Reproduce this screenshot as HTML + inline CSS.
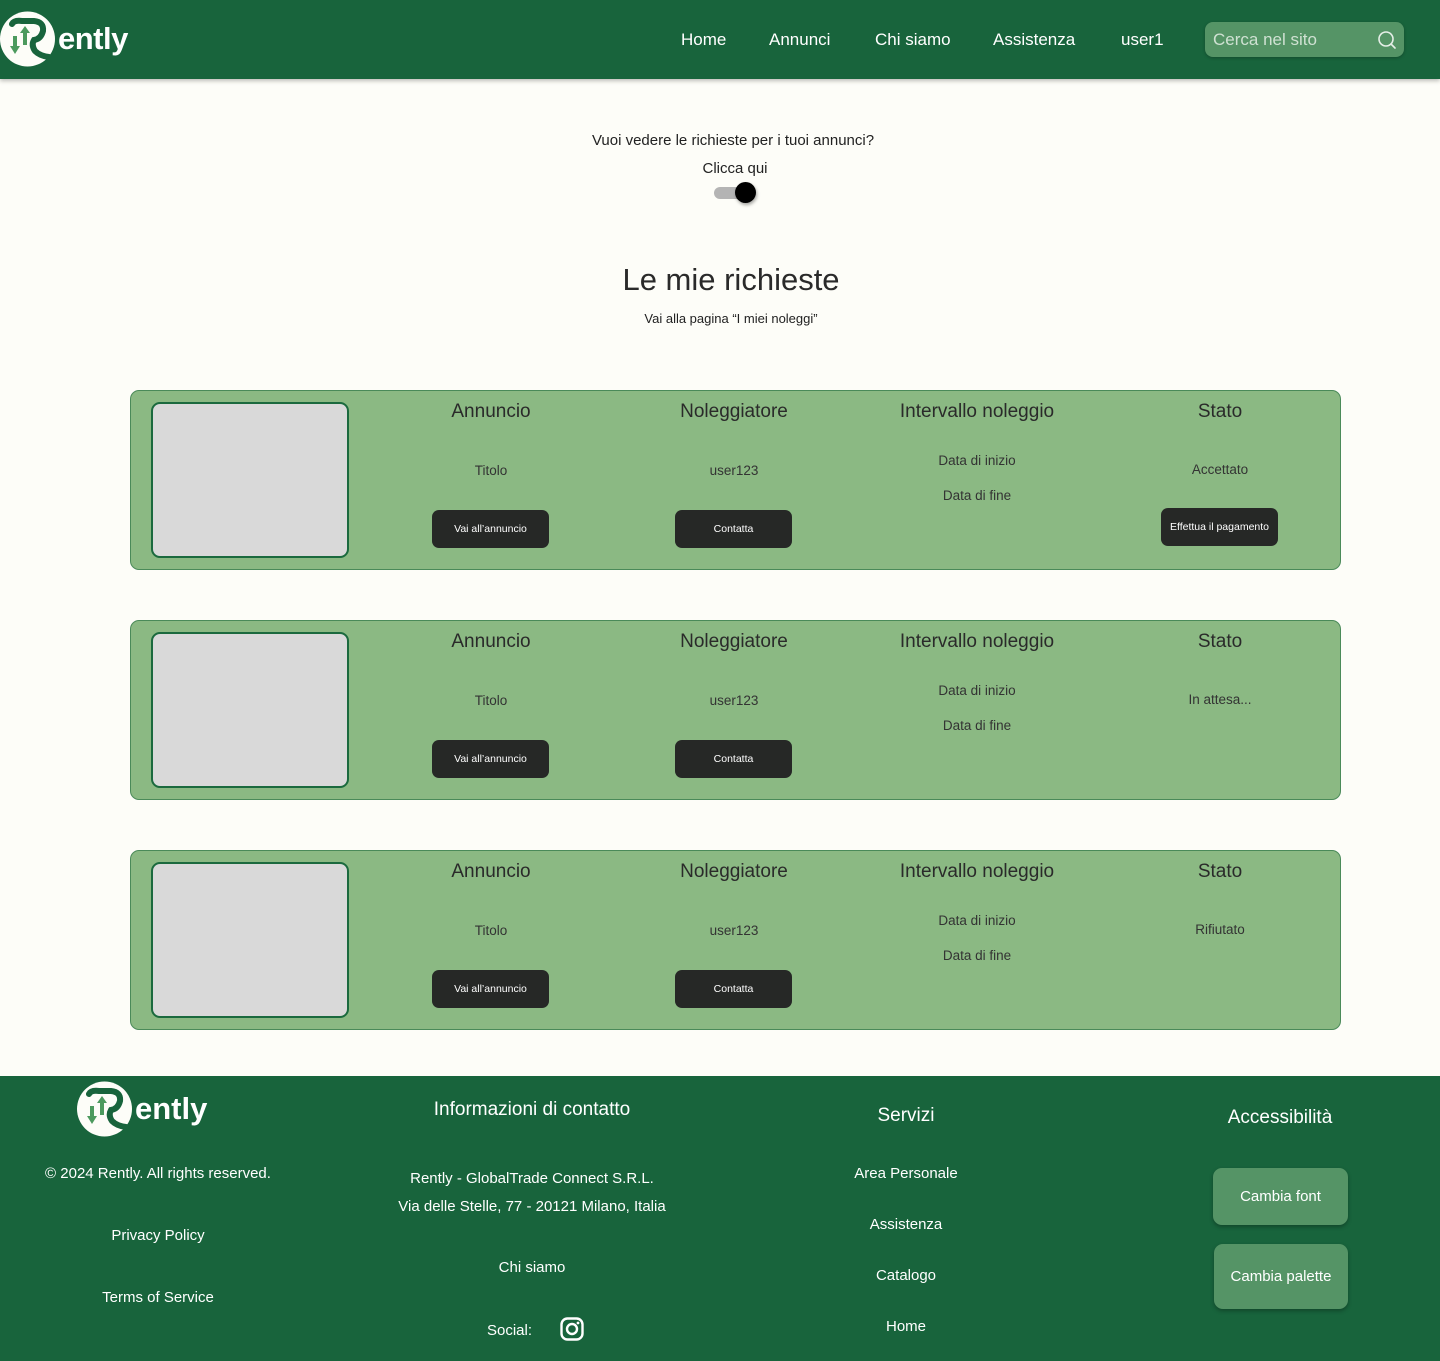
<!DOCTYPE html>
<html><head><meta charset="utf-8"><style>
*{margin:0;padding:0;box-sizing:border-box}
body{width:1440px;height:1361px;background:#fdfdf8;font-family:"Liberation Sans",sans-serif;color:#222;position:relative;overflow:hidden}
.a{position:absolute;white-space:nowrap}
.c{position:absolute;white-space:nowrap;transform:translateX(-50%);text-align:center}
header{position:absolute;left:0;top:0;width:1440px;height:79px;background:#18643c;box-shadow:0 2px 4px rgba(0,0,0,.25)}
.nav{color:#fff;font-size:17px;top:30px}
.search{position:absolute;left:1205px;top:22px;width:199px;height:35px;background:#559466;border-radius:8px;box-shadow:0 1px 3px rgba(0,0,0,.25)}
.card{position:absolute;left:130px;width:1211px;height:180px;background:#8bb983;border:1.5px solid #4a8a59;border-radius:9px}
.img{position:absolute;left:20px;top:11px;width:198px;height:156px;background:#d9d9d9;border:2.5px solid #1b6a3e;border-radius:9px}
.h{font-size:19px;color:#2a2a2a;top:10px}
.t{font-size:13.5px;color:#333}
.btn{position:absolute;width:117px;height:38px;background:#262826;color:#fff;border-radius:7px;font-size:10.5px;display:flex;align-items:center;justify-content:center}
footer{position:absolute;left:0;top:1076px;width:1440px;height:285px;background:#18643c;color:#fff}
footer .c,footer .a{color:#fff}
.fb{position:absolute;background:#559466;border-radius:9px;color:#fff;font-size:15px;display:flex;align-items:center;justify-content:center;box-shadow:0 2px 4px rgba(0,0,0,.3)}
</style></head><body>
<header>
<svg class="a" style="left:0;top:11px" width="56" height="56" viewBox="0 0 56 56"><circle cx="27.5" cy="28" r="27.5" fill="#fdfdf8"/>
<path d="M12 13 Q14 9 22 10 L34 10 Q44 11 43 20 Q41 28 34 29 Q31 34 35 40 Q40 45 49 46" fill="none" stroke="#18643c" stroke-width="6" stroke-linecap="round"/>
<path d="M25 15 L20 22 L23 22 L23 34 L27 34 L27 22 L30 22Z" fill="#4c9a5e"/>
<path d="M13 25 L17 25 L17 35 L20 35 L15 43 L10 35 L13 35Z" fill="#4c9a5e"/></svg>
<div class="a" style="left:58px;top:21px;font-size:31px;font-weight:bold;color:#fff;letter-spacing:-.5px">ently</div>
<div class="a nav" style="left:681px">Home</div>
<div class="a nav" style="left:769px">Annunci</div>
<div class="a nav" style="left:875px">Chi siamo</div>
<div class="a nav" style="left:993px">Assistenza</div>
<div class="a nav" style="left:1121px">user1</div>
<div class="search"><span class="a" style="left:8px;top:8px;font-size:17px;color:#cfe1d2">Cerca nel sito</span>
<svg class="a" style="left:172px;top:8px" width="20" height="20" viewBox="0 0 20 20"><circle cx="9" cy="9" r="7" fill="none" stroke="#e6efe8" stroke-width="1.6"/><path d="M14 14 L18 18" stroke="#e6efe8" stroke-width="1.6" stroke-linecap="round"/></svg></div>
</header>

<div class="c" style="left:733px;top:132px;font-size:15px">Vuoi vedere le richieste per i tuoi annunci?</div>
<div class="c" style="left:735px;top:160px;font-size:15px">Clicca qui</div>
<div class="a" style="left:714px;top:187px;width:38px;height:12px;border-radius:6px;background:#b4b4b4"></div>
<div class="a" style="left:735px;top:182px;width:21px;height:21px;border-radius:50%;background:#000;box-shadow:1px 2px 3px rgba(0,0,0,.35)"></div>

<div class="c" style="left:731px;top:262px;font-size:31px;color:#2a2a2a">Le mie richieste</div>
<div class="c" style="left:731px;top:311px;font-size:13px">Vai alla pagina “I miei noleggi”</div>

<div class="card" style="top:390px">
<div class="img"></div>
<div class="c h" style="left:360px">Annuncio</div><div class="c h" style="left:603px">Noleggiatore</div><div class="c h" style="left:846px">Intervallo noleggio</div><div class="c h" style="left:1089px">Stato</div>
<div class="c t" style="left:360px;top:72px">Titolo</div><div class="c t" style="left:603px;top:72px">user123</div>
<div class="c t" style="left:846px;top:62px">Data di inizio</div><div class="c t" style="left:846px;top:97px">Data di fine</div>
<div class="c t" style="left:1089px;top:71px">Accettato</div>
<div class="btn" style="left:301px;top:119px">Vai all’annuncio</div><div class="btn" style="left:544px;top:119px">Contatta</div>
<div class="btn" style="left:1030px;top:117px;width:117px">Effettua il pagamento</div>
</div>

<div class="card" style="top:620px">
<div class="img"></div>
<div class="c h" style="left:360px">Annuncio</div><div class="c h" style="left:603px">Noleggiatore</div><div class="c h" style="left:846px">Intervallo noleggio</div><div class="c h" style="left:1089px">Stato</div>
<div class="c t" style="left:360px;top:72px">Titolo</div><div class="c t" style="left:603px;top:72px">user123</div>
<div class="c t" style="left:846px;top:62px">Data di inizio</div><div class="c t" style="left:846px;top:97px">Data di fine</div>
<div class="c t" style="left:1089px;top:71px">In attesa...</div>
<div class="btn" style="left:301px;top:119px">Vai all’annuncio</div><div class="btn" style="left:544px;top:119px">Contatta</div>
</div>

<div class="card" style="top:850px">
<div class="img"></div>
<div class="c h" style="left:360px">Annuncio</div><div class="c h" style="left:603px">Noleggiatore</div><div class="c h" style="left:846px">Intervallo noleggio</div><div class="c h" style="left:1089px">Stato</div>
<div class="c t" style="left:360px;top:72px">Titolo</div><div class="c t" style="left:603px;top:72px">user123</div>
<div class="c t" style="left:846px;top:62px">Data di inizio</div><div class="c t" style="left:846px;top:97px">Data di fine</div>
<div class="c t" style="left:1089px;top:71px">Rifiutato</div>
<div class="btn" style="left:301px;top:119px">Vai all’annuncio</div><div class="btn" style="left:544px;top:119px">Contatta</div>
</div>

<footer>
<svg class="a" style="left:77px;top:5px" width="56" height="56" viewBox="0 0 56 56"><circle cx="27.5" cy="28" r="27.5" fill="#fdfdf8"/>
<path d="M12 13 Q14 9 22 10 L34 10 Q44 11 43 20 Q41 28 34 29 Q31 34 35 40 Q40 45 49 46" fill="none" stroke="#18643c" stroke-width="6" stroke-linecap="round"/>
<path d="M25 15 L20 22 L23 22 L23 34 L27 34 L27 22 L30 22Z" fill="#4c9a5e"/>
<path d="M13 25 L17 25 L17 35 L20 35 L15 43 L10 35 L13 35Z" fill="#4c9a5e"/></svg>
<div class="a" style="left:135px;top:15px;font-size:31px;font-weight:bold">ently</div>
<div class="c" style="left:158px;top:89px;font-size:15px">© 2024 Rently. All rights reserved.</div>
<div class="c" style="left:158px;top:151px;font-size:15px">Privacy Policy</div>
<div class="c" style="left:158px;top:213px;font-size:15px">Terms of Service</div>

<div class="c" style="left:532px;top:23px;font-size:19px">Informazioni di contatto</div>
<div class="c" style="left:532px;top:94px;font-size:15px">Rently - GlobalTrade Connect S.R.L.</div>
<div class="c" style="left:532px;top:122px;font-size:15px">Via delle Stelle, 77 - 20121 Milano, Italia</div>
<div class="c" style="left:532px;top:183px;font-size:15px">Chi siamo</div>
<div class="a" style="left:487px;top:246px;font-size:15px">Social:</div>
<svg class="a" style="left:560px;top:241px" width="24" height="24" viewBox="0 0 24 24"><rect x="1.5" y="1.5" width="21" height="21" rx="6" fill="none" stroke="#fff" stroke-width="2.4"/><circle cx="12" cy="12" r="5" fill="none" stroke="#fff" stroke-width="2.4"/><circle cx="18" cy="6" r="1.4" fill="#fff"/></svg>

<div class="c" style="left:906px;top:29px;font-size:19px">Servizi</div>
<div class="c" style="left:906px;top:89px;font-size:15px">Area Personale</div>
<div class="c" style="left:906px;top:140px;font-size:15px">Assistenza</div>
<div class="c" style="left:906px;top:191px;font-size:15px">Catalogo</div>
<div class="c" style="left:906px;top:242px;font-size:15px">Home</div>

<div class="c" style="left:1280px;top:31px;font-size:19px">Accessibilità</div>
<div class="fb" style="left:1213px;top:92px;width:135px;height:57px">Cambia font</div>
<div class="fb" style="left:1214px;top:168px;width:134px;height:65px">Cambia palette</div>
</footer>
</body></html>
